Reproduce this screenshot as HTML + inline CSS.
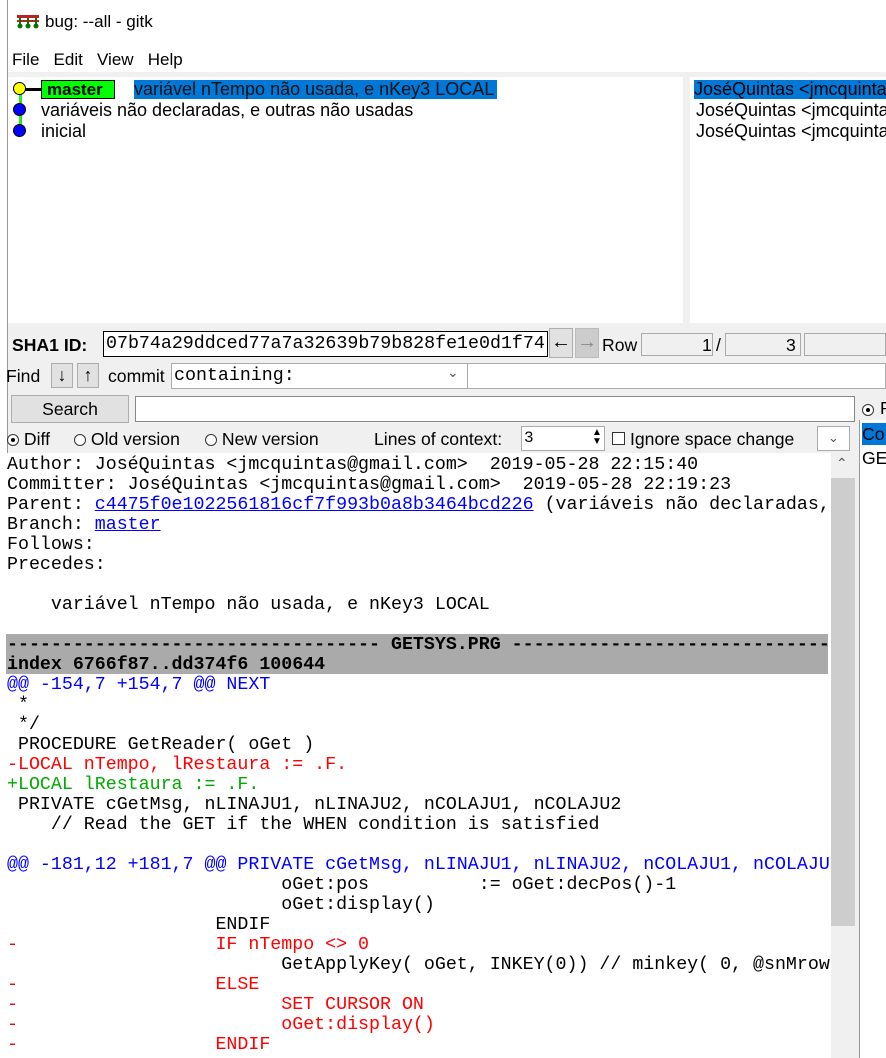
<!DOCTYPE html>
<html><head><meta charset="utf-8"><style>
*{margin:0;padding:0;box-sizing:border-box}
body{width:886px;height:1058px;overflow:hidden;background:#f0f0f0;font-family:"Liberation Sans",sans-serif;position:relative}
.a{position:absolute}
.s{font-family:"Liberation Sans",sans-serif;font-size:17.6px;color:#000;white-space:pre}
.m{font-family:"Liberation Mono",monospace;font-size:18.3px;white-space:pre;line-height:20px}
.box{background:#fff;border:1px solid #7a7a7a}
.btn{background:#e1e1e1;border:1px solid #adadad}
.rad{display:inline-block;width:12px;height:12px;border:1px solid #333;border-radius:50%;vertical-align:-1px;background:#fff;position:relative}
.rad.on::after{content:"";position:absolute;left:3px;top:3px;width:4px;height:4px;border-radius:50%;background:#000}
</style></head><body>
<div class="a" style="left:0;top:0;width:8px;height:1058px;background:#fff;border-right:1px solid #999"></div>
<div class="a" style="left:8px;top:0;width:878px;height:76px;background:#fff"></div>
<svg class="a" style="left:17px;top:15px" width="22" height="14"><rect x="0" y="0" width="22" height="3" fill="#b22"/><rect x="0" y="5" width="22" height="2" fill="#b22"/><circle cx="3" cy="11" r="2.5" fill="#070"/><circle cx="11" cy="11" r="2.5" fill="#070"/><circle cx="19" cy="11" r="2.5" fill="#070"/><rect x="2" y="3" width="2" height="6" fill="#070"/><rect x="10" y="3" width="2" height="6" fill="#070"/><rect x="18" y="3" width="2" height="6" fill="#070"/></svg>
<div class="a s" style="left:45px;top:12px;font-size:17px">bug: --all - gitk</div>
<div class="a s" style="left:12px;top:50px;font-size:17px">File   Edit   View   Help</div>
<div class="a" style="left:8px;top:72px;width:878px;height:5px;background:#f0f0f0"></div>
<div class="a" style="left:8px;top:77px;width:675px;height:246px;background:#fff"></div>
<div class="a" style="left:690px;top:77px;width:196px;height:246px;background:#fff"></div>
<!-- graph -->
<div class="a" style="left:19px;top:90px;width:3px;height:42px;background:#2e2"></div>
<div class="a" style="left:20px;top:88px;width:22px;height:3px;background:#000"></div>
<div class="a" style="left:13px;top:82px;width:13px;height:13px;border-radius:50%;background:#ff0;border:1px solid #000"></div>
<div class="a" style="left:13px;top:103px;width:13px;height:13px;border-radius:50%;background:#00f;border:1px solid #000"></div>
<div class="a" style="left:13px;top:124px;width:13px;height:13px;border-radius:50%;background:#00f;border:1px solid #000"></div>
<div class="a s" style="left:41px;top:80px;width:74px;height:19px;background:#0f0;border:1px solid #000;font-weight:bold;font-size:17px;padding-left:5px;line-height:17px">master</div>
<div class="a s" style="left:134px;top:80px;width:363px;height:19px;background:#0078d7;color:#111;line-height:19px;font-size:18px;overflow:hidden">variável nTempo não usada, e nKey3 LOCAL</div>
<div class="a s" style="left:41px;top:101px;line-height:19px;font-size:18px">variáveis não declaradas, e outras não usadas</div>
<div class="a s" style="left:41px;top:122px;line-height:19px;font-size:18px">inicial</div>
<div class="a s" style="left:694px;top:80px;width:192px;height:19px;background:#0078d7;line-height:19px;overflow:hidden;font-size:18px">JoséQuintas &lt;jmcquintas</div>
<div class="a s" style="left:696px;top:101px;line-height:19px;font-size:18px">JoséQuintas &lt;jmcquinta</div>
<div class="a s" style="left:696px;top:122px;line-height:19px;font-size:18px">JoséQuintas &lt;jmcquinta</div>
<!-- sha row -->
<div class="a s" style="left:12px;top:335px;font-weight:bold">SHA1 ID:</div>
<div class="a box" style="left:103px;top:331px;width:445px;height:26px;border-color:#000"></div>
<div class="a m" style="left:106px;top:334px">07b74a29ddced77a7a32639b79b828fe1e0d1f74</div>
<div class="a btn" style="left:549px;top:328px;width:24px;height:30px;font-size:20px;text-align:center;line-height:26px">&#8592;</div>
<div class="a" style="left:575px;top:328px;width:24px;height:30px;background:#ccc;border:1px solid #bbb;font-size:20px;text-align:center;line-height:26px;color:#888">&#8594;</div>
<div class="a s" style="left:602px;top:335px">Row</div>
<div class="a" style="left:641px;top:333px;width:72px;height:23px;border:1px solid #aaa;background:#f0f0f0"></div>
<div class="a s" style="left:702px;top:335px">1</div>
<div class="a s" style="left:716px;top:335px">/</div>
<div class="a" style="left:725px;top:333px;width:76px;height:23px;border:1px solid #aaa;background:#f0f0f0"></div>
<div class="a s" style="left:786px;top:335px">3</div>
<div class="a" style="left:804px;top:333px;width:82px;height:23px;border:1px solid #aaa;background:#f0f0f0"></div>
<!-- find row -->
<div class="a s" style="left:6px;top:366px">Find</div>
<div class="a btn" style="left:51px;top:363px;width:22px;height:25px;font-size:18px;text-align:center;line-height:23px">&#8595;</div>
<div class="a btn" style="left:77px;top:363px;width:22px;height:25px;font-size:18px;text-align:center;line-height:23px">&#8593;</div>
<div class="a s" style="left:108px;top:366px">commit</div>
<div class="a box" style="left:171px;top:363px;width:297px;height:26px;border-color:#aaa"></div>
<div class="a m" style="left:174px;top:366px">containing:</div>
<div class="a s" style="left:447px;top:364px;font-size:14px;color:#555">&#8964;</div>
<div class="a box" style="left:467px;top:363px;width:419px;height:26px;border-color:#aaa"></div>
<!-- search -->
<div class="a btn" style="left:11px;top:395px;width:118px;height:28px;text-align:center;line-height:27px"><span class="s">Search</span></div>
<div class="a box" style="left:135px;top:396px;width:720px;height:26px;border-color:#888"></div>
<div class="a" style="left:862px;top:402px"><span class="rad on"></span></div>
<div class="a s" style="left:880px;top:398px">P</div>
<!-- diff opts -->
<div class="a s" style="left:7px;top:429px"><span class="rad on"></span> Diff</div>
<div class="a s" style="left:74px;top:429px"><span class="rad"></span> Old version</div>
<div class="a s" style="left:205px;top:429px"><span class="rad"></span> New version</div>
<div class="a s" style="left:374px;top:429px">Lines of context:</div>
<div class="a box" style="left:521px;top:426px;width:84px;height:25px;border-color:#aaa"></div>
<div class="a m" style="left:524px;top:428px;font-size:16px">3</div>
<div class="a s" style="left:592px;top:428px;font-size:10px;line-height:9px">&#9650;<br>&#9660;</div>
<div class="a" style="left:612px;top:432px;width:13px;height:13px;border:1px solid #333;background:#fff"></div>
<div class="a s" style="left:630px;top:429px">Ignore space change</div>
<div class="a box" style="left:817px;top:426px;width:33px;height:25px;border-color:#aaa;font-size:13px;text-align:center;line-height:22px;color:#555">&#8964;</div>
<!-- right panel -->
<div class="a" style="left:859px;top:420px;width:27px;height:638px;background:#fff;border-left:1px solid #999"></div>
<div class="a s" style="left:862px;top:423px;width:24px;height:22px;background:#0078d7;line-height:22px;overflow:hidden">Co</div>
<div class="a s" style="left:862px;top:447px;line-height:22px;overflow:hidden;width:24px">GE</div>
<!-- diff text -->
<div class="a" style="left:6px;top:453px;width:825px;height:605px;background:#fff;overflow:hidden">
<div class="a" style="left:0;top:181px;width:822px;height:40px;background:#aaa"></div>
<div class="m a" style="left:1px;top:2px;color:#000">Author: JoséQuintas &lt;jmcquintas@gmail.com&gt;  2019-05-28 22:15:40
Committer: JoséQuintas &lt;jmcquintas@gmail.com&gt;  2019-05-28 22:19:23
Parent: <span style="color:#00f;text-decoration:underline">c4475f0e1022561816cf7f993b0a8b3464bcd226</span> (variáveis não declaradas, e
Branch: <span style="color:#00f;text-decoration:underline">master</span>
Follows:
Precedes:

    variável nTempo não usada, e nKey3 LOCAL

<b>---------------------------------- GETSYS.PRG ----------------------------------
index 6766f87..dd374f6 100644</b>
<span style="color:#00f">@@ -154,7 +154,7 @@ NEXT</span>
 *
 */
 PROCEDURE GetReader( oGet )
<span style="color:#f00">-LOCAL nTempo, lRestaura := .F.</span>
<span style="color:#0a0">+LOCAL lRestaura := .F.</span>
 PRIVATE cGetMsg, nLINAJU1, nLINAJU2, nCOLAJU1, nCOLAJU2
    // Read the GET if the WHEN condition is satisfied

<span style="color:#00f">@@ -181,12 +181,7 @@ PRIVATE cGetMsg, nLINAJU1, nLINAJU2, nCOLAJU1, nCOLAJU2</span>
                         oGet:pos          := oGet:decPos()-1
                         oGet:display()
                   ENDIF
<span style="color:#f00">-                  IF nTempo &lt;&gt; 0</span>
                         GetApplyKey( oGet, INKEY(0)) // minkey( 0, @snMrow
<span style="color:#f00">-                  ELSE
-                        SET CURSOR ON
-                        oGet:display()
-                  ENDIF</span></div>
</div>
<!-- scrollbar -->
<div class="a" style="left:831px;top:453px;width:24px;height:605px;background:#f0f0f0"></div>
<div class="a s" style="left:836px;top:455px;font-size:14px;color:#555">&#8963;</div>
<div class="a" style="left:831px;top:478px;width:24px;height:448px;background:#cdcdcd"></div>
</body></html>
